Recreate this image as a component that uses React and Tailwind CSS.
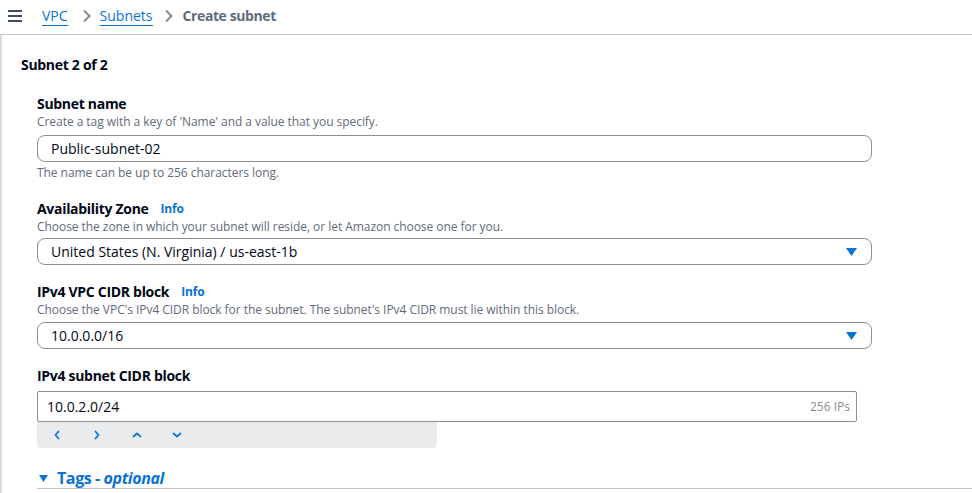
import React from "react";

const Caret = () => (
  <svg width="11" height="8" viewBox="0 0 11 8" className="shrink-0">
    <path d="M0 0 H11 L5.5 8 Z" fill="#0972d3" />
  </svg>
);

const Chev = ({ d }) => (
  <svg width="10" height="10" viewBox="0 0 10 10" className="shrink-0">
    <path d={d} fill="none" stroke="#0972d3" strokeWidth="1.7" strokeLinecap="round" strokeLinejoin="round" />
  </svg>
);

const Label = ({ children, info, className = "" }) => (
  <div className={"flex items-center h-5 " + className}>
    <span className="text-[14px] font-bold text-[#000716] leading-5 tracking-[-0.3px]">{children}</span>
    {info && <span className="ml-[12px] text-[12px] font-bold text-[#0972d3] leading-5 tracking-[-0.2px]">Info</span>}
  </div>
);

const Desc = ({ children, className = "" }) => (
  <div className={"text-[12px] leading-4 text-[#5f6b7a] tracking-[-0.05px] " + className}>{children}</div>
);

const Select = ({ value, className = "" }) => (
  <div className={"w-[835px] h-[27px] border border-[#8c8c94] rounded-[8px] flex items-center justify-between pl-[13px] pr-[14px] " + className}>
    <span className="text-[14px] text-[#000716]">{value}</span>
    <Caret />
  </div>
);

export default function App() {
  return (
    <div className="w-[972px] h-[493px] overflow-hidden bg-white font-['Open_Sans',sans-serif]">
      <div className="h-[35px] border-b border-[#c6c6cd] flex items-center">
        <div className="ml-[8px] w-[14px] flex flex-col gap-[3px] mt-[-2px]">
          <div className="h-[2px] bg-[#414d5c]" />
          <div className="h-[2px] bg-[#414d5c]" />
          <div className="h-[2px] bg-[#414d5c]" />
        </div>
        <span className="ml-[20px] text-[14px] text-[#0972d3] border-b border-[#0972d3] leading-[18px] mt-[-1px]">VPC</span>
        <svg width="10" height="14" viewBox="0 0 10 14" className="ml-[14px] mt-[-2px]">
          <path d="M2 1.5 L7.5 7 L2 12.5" fill="none" stroke="#7d8998" strokeWidth="2" />
        </svg>
        <span className="ml-[8px] text-[14px] text-[#0972d3] border-b border-[#0972d3] leading-[18px] mt-[-1px]">Subnets</span>
        <svg width="10" height="14" viewBox="0 0 10 14" className="ml-[11px] mt-[-2px]">
          <path d="M2 1.5 L7.5 7 L2 12.5" fill="none" stroke="#7d8998" strokeWidth="2" />
        </svg>
        <span className="ml-[9px] text-[14px] font-bold text-[#5f6b7a] leading-[18px] mt-[-2px] tracking-[-0.4px]">Create subnet</span>
      </div>
      <div className="border-l-2 border-[#dcdcdf] h-[458px] pl-[19px] pt-[20px]">
        <div className="text-[14px] font-bold text-[#000716] leading-5 tracking-[-0.3px]">Subnet 2 of 2</div>
        <div className="ml-[16px] mt-[19px]">
          <Label>Subnet name</Label>
          <Desc>Create a tag with a key of 'Name' and a value that you specify.</Desc>
          <div className="mt-[5px] w-[835px] h-[27px] border border-[#8c8c94] rounded-[8px] flex items-center pl-[13px]">
            <span className="text-[14px] text-[#000716]">Public-subnet-02</span>
          </div>
          <Desc className="mt-[3px]">The name can be up to 256 characters long.</Desc>

          <Label info className="mt-[18px]">Availability Zone</Label>
          <Desc>Choose the zone in which your subnet will reside, or let Amazon choose one for you.</Desc>
          <Select className="mt-[3px]" value="United States (N. Virginia) / us-east-1b" />

          <Label info className="mt-[17px]">IPv4 VPC CIDR block</Label>
          <Desc>Choose the VPC's IPv4 CIDR block for the subnet. The subnet's IPv4 CIDR must lie within this block.</Desc>
          <Select className="mt-[4px]" value="10.0.0.0/16" />

          <Label className="mt-[17px]">IPv4 subnet CIDR block</Label>
          <div className="mt-[5px] w-[820px] h-[31px] border border-[#8c8c94] rounded-[2px] flex items-center justify-between pl-[9px] pr-[6px]">
            <span className="text-[14px] text-[#000716]">10.0.2.0/24</span>
            <span className="text-[12px] text-[#8c8c94]">256 IPs</span>
          </div>
          <div className="w-[400px] h-[26px] bg-[#e9ebed] rounded-b-[4px] flex items-center pl-[15px] gap-[30px]">
            <Chev d="M6.5 1.5 L3.5 5 L6.5 8.5" />
            <Chev d="M3.5 1.5 L6.5 5 L3.5 8.5" />
            <Chev d="M1.5 6.5 L5 3.5 L8.5 6.5" />
            <Chev d="M1.5 3.5 L5 6.5 L8.5 3.5" />
          </div>

          <div className="mt-[20px] h-[21px] border-b border-[#c6c6cd] flex items-center w-[940px]">
            <svg width="9" height="7" viewBox="0 0 9 7" className="ml-[2px] mt-[1px]">
              <path d="M0 0 H9 L4.5 7 Z" fill="#0972d3" />
            </svg>
            <span className="ml-[9px] text-[16px] font-bold text-[#0972d3] leading-5 tracking-[-0.4px]">
              Tags - <i>optional</i>
            </span>
          </div>
        </div>
      </div>
    </div>
  );
}
